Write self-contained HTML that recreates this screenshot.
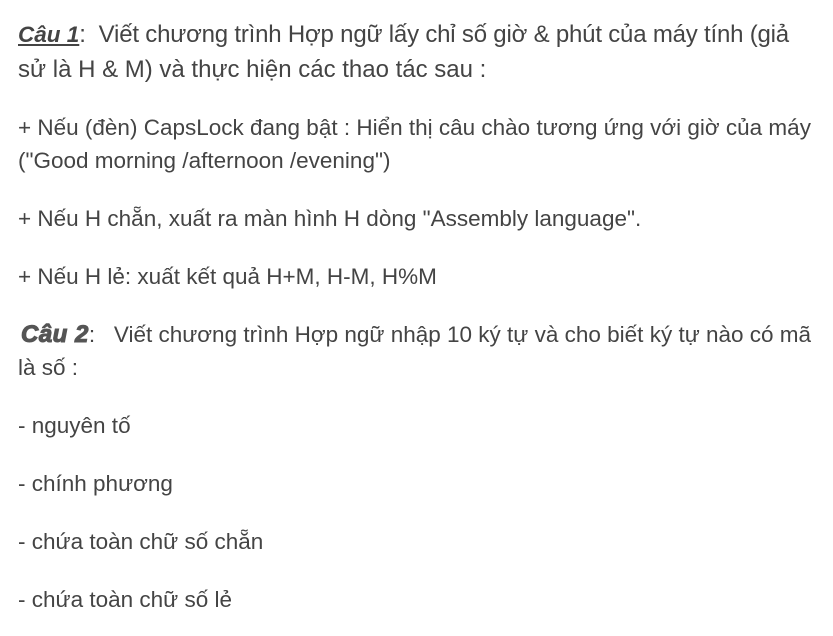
<!DOCTYPE html>
<html><head><meta charset="utf-8"><style>
html,body{margin:0;padding:0;background:#fff;width:833px;height:636px;overflow:hidden}
body{font-family:"Liberation Sans",Arial,sans-serif;font-size:22.5px;line-height:33px;color:#444;padding:17px 0 0 18px;box-sizing:border-box}
p{margin:0 0 25px 0;white-space:nowrap}
.p1{font-size:24px;line-height:35px;margin-bottom:24px}
.l1{letter-spacing:-0.2px}
.c1{font-size:22.5px;font-weight:bold;font-style:italic;text-decoration:underline;letter-spacing:0}
.c2{display:inline-block;padding-left:3px;font-size:24px;font-weight:900;font-style:italic;color:#555;-webkit-text-stroke:1.1px #555;letter-spacing:0.5px}
</style></head><body>
<p class="p1"><span class="l1"><span class="c1">Câu 1</span>:&nbsp; Viết chương trình Hợp ngữ lấy chỉ số giờ &amp; phút của máy tính (giả</span><br>sử là H &amp; M) và thực hiện các thao tác sau :</p>
<p>+ Nếu (đèn) CapsLock đang bật : Hiển thị câu chào tương ứng với giờ của máy<br>("Good morning /afternoon /evening")</p>
<p>+ Nếu H chẵn, xuất ra màn hình H dòng "Assembly language".</p>
<p>+ Nếu H lẻ: xuất kết quả H+M, H-M, H%M</p>
<p><span class="c2">Câu 2</span>:&nbsp;&nbsp; Viết chương trình Hợp ngữ nhập 10 ký tự và cho biết ký tự nào có mã<br>là số :</p>
<p>- nguyên tố</p>
<p>- chính phương</p>
<p>- chứa toàn chữ số chẵn</p>
<p>- chứa toàn chữ số lẻ</p>
</body></html>
